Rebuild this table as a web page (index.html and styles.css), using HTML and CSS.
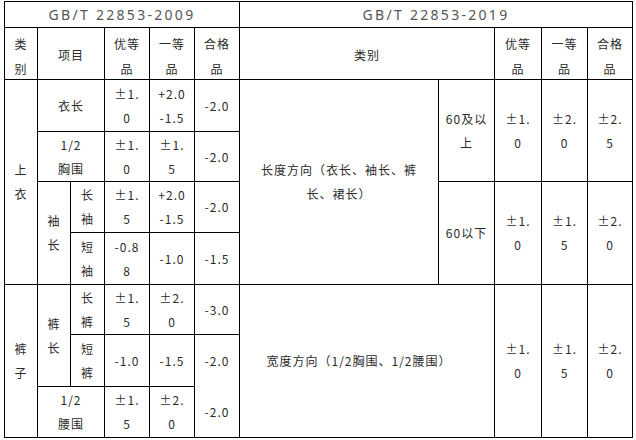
FILE: index.html
```html
<!DOCTYPE html>
<html lang="zh-CN">
<head>
<meta charset="utf-8">
<title>GB/T 22853</title>
<link rel="stylesheet" href="styles.css">
</head>
<body>
<div class="page">
  <div class="grid">
    <div class="cell title s6">GB/T 22853-2009</div>
    <div class="cell title s5">GB/T 22853-2019</div>

    <div class="cell head">类<br>别</div>
    <div class="cell head s2 mid">项目</div>
    <div class="cell head">优等<br>品</div>
    <div class="cell head">一等<br>品</div>
    <div class="cell head">合格<br>品</div>
    <div class="cell head s2 mid">类别</div>
    <div class="cell head">优等<br>品</div>
    <div class="cell head">一等<br>品</div>
    <div class="cell head">合格<br>品</div>

    <div class="cell r4">上<br>衣</div>
    <div class="cell s2">衣长</div>
    <div class="cell">±1.<br>0</div>
    <div class="cell">+2.0<br>-1.5</div>
    <div class="cell">-2.0</div>
    <div class="cell r4">长度方向（衣长、袖长、裤<br>长、裙长）</div>
    <div class="cell r2">60及以<br>上</div>
    <div class="cell r2">±1.<br>0</div>
    <div class="cell r2">±2.<br>0</div>
    <div class="cell r2">±2.<br>5</div>

    <div class="cell s2">1/2<br>胸围</div>
    <div class="cell">±1.<br>0</div>
    <div class="cell">±1.<br>5</div>
    <div class="cell">-2.0</div>

    <div class="cell r2">袖<br>长</div>
    <div class="cell">长<br>袖</div>
    <div class="cell">±1.<br>5</div>
    <div class="cell">+2.0<br>-1.5</div>
    <div class="cell">-2.0</div>
    <div class="cell r2">60以下</div>
    <div class="cell r2">±1.<br>0</div>
    <div class="cell r2">±1.<br>5</div>
    <div class="cell r2">±2.<br>0</div>

    <div class="cell">短<br>袖</div>
    <div class="cell">-0.8<br>8</div>
    <div class="cell">-1.0</div>
    <div class="cell">-1.5</div>

    <div class="cell r3">裤<br>子</div>
    <div class="cell r2">裤<br>长</div>
    <div class="cell">长<br>裤</div>
    <div class="cell">±1.<br>5</div>
    <div class="cell">±2.<br>0</div>
    <div class="cell">-3.0</div>
    <div class="cell s2 r3 wide">宽度方向（1/2胸围、1/2腰围）</div>
    <div class="cell r3">±1.<br>0</div>
    <div class="cell r3">±1.<br>5</div>
    <div class="cell r3">±2.<br>0</div>

    <div class="cell">短<br>裤</div>
    <div class="cell">-1.0</div>
    <div class="cell">-1.5</div>
    <div class="cell r2 split">
      <div class="half top">-2.0</div>
      <div class="half bottom">-2.0</div>
    </div>

    <div class="cell s2">1/2<br>腰围</div>
    <div class="cell">±1.<br>5</div>
    <div class="cell">±2.<br>0</div>
  </div>
</div>
</body>
</html>
```

FILE: styles.css
```css
html, body {
  margin: 0;
  padding: 0;
  background: #fff;
}

.page {
  padding: 1px 0 0 4px;
}

.grid {
  display: grid;
  width: max-content;
  grid-template-columns: 32px 32px 33px 44px 44px 44px 198px 55px 46px 45px 44px;
  grid-template-rows: 25px 51px 51px 49px 50px 51px 49px 51px 50px;
  gap: 1px;
  padding: 1px;
  background: #000;
}

.cell {
  background: #fff;
  display: flex;
  align-items: center;
  justify-content: center;
  text-align: center;
  font-family: "Noto Sans CJK SC", "Noto Sans", sans-serif;
  font-size: 12px;
  line-height: 24px;
  letter-spacing: 1px;
  color: #2b2b2b;
}

.title {
  font-family: "Noto Sans", "Noto Sans CJK SC", sans-serif;
  font-size: 14px;
  letter-spacing: 2.3px;
  color: #555;
  line-height: 20px;
}

.head {
  line-height: 25px;
  padding-top: 4px;
  box-sizing: border-box;
}

.head.mid {
  padding-top: 2px;
}

.wide {
  padding-right: 16px;
}

.s2 { grid-column: span 2; }
.s5 { grid-column: span 5; }
.s6 { grid-column: span 6; }
.r2 { grid-row: span 2; }
.r3 { grid-row: span 3; }
.r4 { grid-row: span 4; }

.split {
  flex-direction: column;
  align-items: stretch;
  justify-content: flex-start;
}

.half {
  display: flex;
  align-items: center;
  justify-content: center;
}

.half.top { height: 52px; }
.half.bottom { height: 50px; }
```
